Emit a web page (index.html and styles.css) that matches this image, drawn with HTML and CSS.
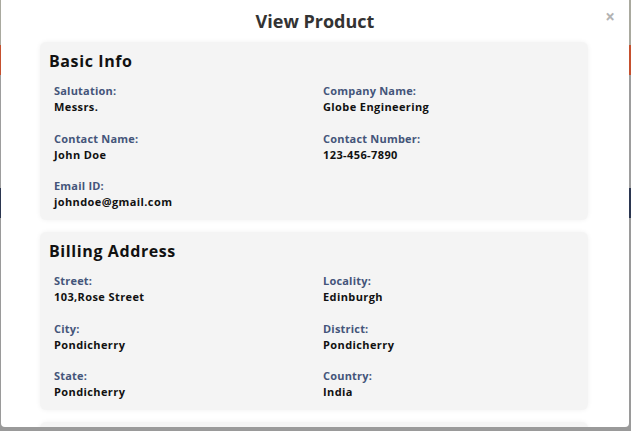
FILE: index.html
```html
<!DOCTYPE html>
<html>
<head>
<meta charset="utf-8">
<link rel="stylesheet" href="styles.css">
</head>
<body>
<div class="modal">
  <div class="modal-header">
    <h1 class="modal-title">View Product</h1>
    <span class="close">&times;</span>
  </div>
  <div class="modal-body">
    <section class="card">
      <h2 class="card-title">Basic Info</h2>
      <div class="fields">
        <div class="field"><div class="label">Salutation:</div><div class="value">Messrs.</div></div>
        <div class="field"><div class="label">Company Name:</div><div class="value">Globe Engineering</div></div>
        <div class="field"><div class="label">Contact Name:</div><div class="value">John Doe</div></div>
        <div class="field"><div class="label">Contact Number:</div><div class="value">123-456-7890</div></div>
        <div class="field"><div class="label">Email ID:</div><div class="value">johndoe@gmail.com</div></div>
      </div>
    </section>
    <section class="card">
      <h2 class="card-title">Billing Address</h2>
      <div class="fields">
        <div class="field"><div class="label">Street:</div><div class="value">103,Rose Street</div></div>
        <div class="field"><div class="label">Locality:</div><div class="value">Edinburgh</div></div>
        <div class="field"><div class="label">City:</div><div class="value">Pondicherry</div></div>
        <div class="field"><div class="label">District:</div><div class="value">Pondicherry</div></div>
        <div class="field"><div class="label">State:</div><div class="value">Pondicherry</div></div>
        <div class="field"><div class="label">Country:</div><div class="value">India</div></div>
      </div>
    </section>
    <section class="card card-empty"></section>
  </div>
</div>
</body>
</html>
```
FILE: styles.css
```css
html, body {
  margin: 0;
  padding: 0;
  height: 100%;
}
body {
  background: linear-gradient(to bottom,
    #a9a99f 0, #a9a99f 45px,
    #c5502e 45px, #c5502e 75px,
    #9d9d9d 75px, #9d9d9d 188px,
    #2b3650 188px, #2b3650 218px,
    #9a9a9a 218px);
  font-family: "Open Sans", "Liberation Sans", sans-serif;
  overflow: hidden;
}
.modal {
  margin-left: 1px;
  width: 628px;
  height: 427px;
  background: #fff;
  border-radius: 0 0 4px 4px;
  overflow: hidden;
  box-sizing: border-box;
}
.modal-header {
  position: relative;
  height: 42px;
  display: flex;
  align-items: center;
  justify-content: center;
}
.modal-title {
  margin: 0;
  font-size: 18px;
  font-weight: 700;
  color: #333;
  line-height: 40px;
}
.close {
  position: absolute;
  right: 14px;
  top: 7px;
  font-size: 17px;
  font-weight: 700;
  color: #b3b3b3;
  line-height: 20px;
}
.modal-body {
  padding-left: 39px;
  width: 548px;
  display: flex;
  flex-direction: column;
  gap: 12px;
}
.card {
  background: #f4f4f4;
  border-radius: 6px;
  box-shadow: 0 0 5px rgba(0,0,0,0.06);
  padding: 9px 14px 10px 9px;
}
.card-empty {
  height: 40px;
}
.card-title {
  margin: 0 0 12px 0;
  font-size: 16px;
  font-weight: 700;
  line-height: 20px;
  letter-spacing: 0.6px;
  color: #111;
}
.fields {
  display: grid;
  grid-template-columns: 269px 1fr;
  row-gap: 15.5px;
  padding-left: 5px;
}
.label {
  font-size: 11px;
  font-weight: 700;
  line-height: 16px;
  letter-spacing: 0.2px;
  color: #44557a;
}
.value {
  font-size: 11px;
  font-weight: 700;
  line-height: 16px;
  letter-spacing: 0.4px;
  color: #111;
}
```
